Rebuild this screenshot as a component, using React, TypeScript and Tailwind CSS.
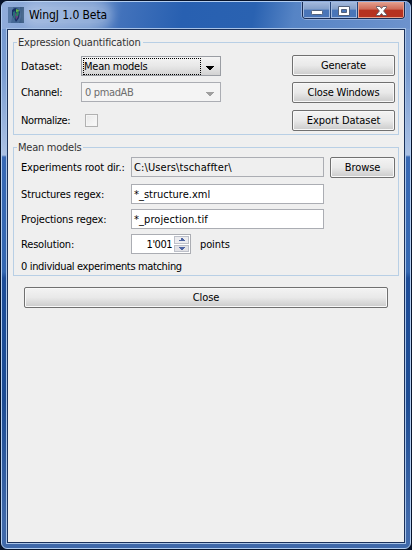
import type { ReactNode } from "react";

function Button({ children, className }: { children: ReactNode; className: string }) {
  return (
    <button
      className={`flex h-[21px] shrink-0 items-center justify-center rounded-[2px] border border-[#707070] bg-linear-to-b from-[#f3f3f3] from-0% via-[#e9e9e9] via-50% to-[#cecece] to-95% pb-px leading-none whitespace-nowrap shadow-[inset_0_0_0_1px_#f8f8f8] ${className}`}
    >
      {children}
    </button>
  );
}

function Group({ title, titleClass, className, children }: { title: string; titleClass: string; className: string; children: ReactNode }) {
  return (
    <section className={`relative w-[386px] border border-[#b8cfe5] ${className}`}>
      <h2 className={`absolute -top-[8px] left-[3px] h-[15px] bg-[#efefef] pl-px leading-[15px] whitespace-nowrap text-[#333] ${titleClass}`}>
        {title}
      </h2>
      {children}
    </section>
  );
}

function Field({ children, className }: { children: ReactNode; className: string }) {
  return (
    <div className={`flex h-5 w-[193px] shrink-0 items-center border border-[#abadb3] pl-[2px] leading-none whitespace-nowrap ${className}`}>
      {children}
    </div>
  );
}

function Arrow({ className, up = false }: { className: string; up?: boolean }) {
  return (
    <svg className={className} viewBox="0 0 8 4" shapeRendering="crispEdges" fill="currentColor">
      <path d={up ? "M3 0h2v1h1v1h1v1h1v1H0V3h1V2h1V1h1z" : "M0 0h8v1H7v1H6v1H5v1H3V3H2V2H1V1H0z"} />
    </svg>
  );
}

function TitleBar() {
  return (
    <header className="flex h-[26px] shrink-0 items-start">
      <svg className="mt-[5px] ml-[6px] h-4 w-4" viewBox="0 0 16 16">
        <rect width="16" height="16" fill="#456895" />
        <path d="M0 0h5v5L3 16H0z" fill="#587aa6" />
        <path d="M4 3l3-2 3 1 2 3-1 6-3 4-2-4-2-3z" fill="#183064" />
        <path d="M5 5l2-1 1 4-1 5-2-4z" fill="#286e78" />
        <path d="M8 2l3 1-1 3-2-1z" fill="#61b44b" />
        <path d="M7 6l3 1v3l-2 3z" fill="#68407d" />
        <path d="M9 4l2 2-1 3H8z" fill="#268459" />
        <path d="M12 0h4v16h-5l2-6z" fill="#365983" />
      </svg>
      <h1 className="mt-[5px] ml-[5px] rounded-full bg-white/25 text-[12px] leading-4 tracking-[-0.08px] whitespace-nowrap text-black shadow-[0_0_9px_6px_rgba(255,255,255,0.25)]">
        WingJ 1.0 Beta
      </h1>
      <div className="mr-[5px] ml-auto flex h-[17px] w-[103px] overflow-hidden rounded-b-[4px] border border-t-0 border-[#192d55] shadow-[0_0_0_1px_#91addb]">
        <div className="flex w-[28px] items-center justify-center border-r border-[#244377] bg-linear-to-b from-[#a4b9dc] via-[#839fc9] via-45% to-[#4975b8] to-50% shadow-[inset_0_0_0_1px_#a2badf]">
          <svg className="mt-[5px] h-[5px] w-3" viewBox="0 0 12 5">
            <rect x=".5" y=".5" width="11" height="4" rx="1" fill="white" stroke="#53617b" />
          </svg>
        </div>
        <div className="flex w-[27px] items-center justify-center border-r border-[#244377] bg-linear-to-b from-[#a4b9dc] via-[#839fc9] via-45% to-[#4975b8] to-50% shadow-[inset_0_0_0_1px_#a2badf]">
          <svg className="mt-px h-[10px] w-3" viewBox="0 0 12 10">
            <path d="M.5.5h11v9H.5z M3.5 3.5h5v3h-5z" fill="white" fillRule="evenodd" stroke="#53617b" />
          </svg>
        </div>
        <div className="flex flex-1 items-center justify-center bg-linear-to-b from-[#e3a090] via-[#cd6a57] via-45% to-[#b63220] to-50% shadow-[inset_0_0_0_1px_#e6a28e]">
          <svg className="mt-px h-[10px] w-[11px]" viewBox="0 0 12 11">
            <path d="M.5.5h3.7L6 2.7 7.8.5h3.7v1.2L8.3 5.5l3.2 3.8v1.2H7.8L6 8.3l-1.8 2.2H.5V9.3l3.2-3.8L.5 1.7z" fill="white" stroke="#5c5560" />
          </svg>
        </div>
      </div>
    </header>
  );
}

function Quantification() {
  return (
    <Group title="Expression Quantification" titleClass="w-[126px] tracking-[-0.16px]" className="mt-[12px] h-[93px]">
      <div className="flex h-full justify-between pr-[3px] pl-[7px]">
        <div className="pt-[13px]">
          <div className="flex h-5 items-center">
            <span className="w-[60px] pt-0.5 tracking-[-0.1px]">Dataset:</span>
            <div className="flex h-5 w-[140px] items-center border border-[#9a9da3] bg-linear-to-b from-[#f4f4f4] via-[#e8e8e8] via-50% to-[#d2d2d2]">
              <span className="ml-px flex h-[17px] w-[118px] items-center border border-dotted border-black leading-none tracking-[-0.25px] whitespace-nowrap">
                Mean models
              </span>
              <Arrow className="mt-[3px] ml-[5px] h-1 w-2 text-black" />
            </div>
          </div>
          <div className="mt-1.5 flex h-5 items-center">
            <span className="w-[60px] pt-0.5 tracking-[-0.35px]">Channel:</span>
            <div className="flex h-5 w-[140px] items-center border border-[#abadb3] bg-[#f4f4f4] pl-[3px] text-[#6d6d6d]">
              <span className="w-[121px] leading-none tracking-[-0.35px]">0 pmadAB</span>
              <Arrow className="mt-[3px] h-1 w-2 text-[#a0a0a0]" />
            </div>
          </div>
          <div className="mt-[8px] flex h-5 items-center">
            <span className="w-[64px] pt-[3px] tracking-[-0.4px]">Normalize:</span>
            <span className="mt-px h-[13px] w-[13px] border border-[#b1b1b1] bg-linear-to-br from-[#e8e8e8] to-[#fbfbfb] shadow-[inset_0_0_0_1px_#f5f5f5]" />
          </div>
        </div>
        <div className="flex flex-col pt-[12px]">
          <Button className="w-[103px] tracking-[-0.15px]">Generate</Button>
          <Button className="mt-1.5 w-[103px] tracking-[-0.17px]">Close Windows</Button>
          <Button className="mt-[7px] w-[103px] tracking-[-0.05px]">Export Dataset</Button>
        </div>
      </div>
    </Group>
  );
}

function MeanModels() {
  return (
    <Group title="Mean models" titleClass="w-[66px] tracking-[-0.25px]" className="mt-[12px] h-[129px] pt-[9px] pl-[7px]">
      <div className="flex h-[21px] items-start leading-5">
        <span className="w-[110px] pt-px tracking-[-0.15px] whitespace-nowrap">Experiments root dir.:</span>
        <Field className="bg-[#efefef] tracking-[0.1px]">C:\Users\tschaffter\</Field>
        <Button className="ml-[6px] w-[65px] tracking-[-0.1px]">Browse</Button>
      </div>
      <div className="mt-[6px] flex h-5 items-center">
        <span className="w-[110px] pt-0.5 tracking-[-0.14px]">Structures regex:</span>
        <Field className="bg-white">*_structure.xml</Field>
      </div>
      <div className="mt-[5px] flex h-5 items-center">
        <span className="w-[110px] pt-0.5 tracking-[-0.17px]">Projections regex:</span>
        <Field className="bg-white tracking-[0.08px]">*_projection.tif</Field>
      </div>
      <div className="mt-[5px] flex h-5 items-center">
        <span className="w-[110px] pt-0.5 tracking-[-0.17px]">Resolution:</span>
        <div className="flex h-5 w-[60px] items-center justify-end border border-[#abadb3] bg-white pr-px leading-none">
          <span className="mr-[2px] tracking-[-0.5px]">1'001</span>
          <div className="flex h-4 w-[15px] flex-col gap-px text-[#4d64a3]">
            <span className="flex flex-1 items-center justify-center border border-[#bdc0c9] bg-[#ececef]"><Arrow up className="h-[3px] w-1.5" /></span>
            <span className="flex flex-1 items-center justify-center border border-[#bdc0c9] bg-[#e2e2e6]"><Arrow className="h-[3px] w-1.5" /></span>
          </div>
        </div>
        <span className="ml-[9px] pt-0.5 tracking-[-0.12px]">points</span>
      </div>
      <p className="mt-[4px] h-[17px] leading-[17px] tracking-[-0.35px] whitespace-nowrap">0 individual experiments matching</p>
    </Group>
  );
}

export default function App() {
  return (
    <div className="h-[550px] w-[412px] bg-[#07132a] p-px font-['DejaVu_Sans_Condensed','DejaVu_Sans',sans-serif] text-[11px] text-black [font-stretch:condensed]">
      <div className="flex h-[548px] w-[410px] flex-col rounded-[6px] border border-[#b2cdf0] bg-[linear-gradient(#7396cd_0px,#7a9dd2_70px,#abc1e4_153px,#3869b5_155px,#3467b1_270px,#1d4d99_276px,#1d4c94_400px,#4069aa_520px)]">
        <div className="flex min-h-0 flex-1 flex-col rounded-t-[5px] bg-[linear-gradient(100deg,#91addb_0px,#6f94cd_90px,#4272bb_120px,#2860b1_180px,#2a62b1_250px,#5684c5_290px,#6e93cd_410px)] bg-[length:100%_27px] bg-no-repeat">
          <TitleBar />
          <main className="mx-[4px] mb-[4px] flex min-h-0 flex-1 flex-col border border-[#a8c3e7] bg-[#efefef]">
            <div className="flex-1 border border-[#1b315a] pl-[5px]">
              <Quantification />
              <MeanModels />
              <div className="mt-[11px] ml-[11px]">
                <Button className="w-[364px] tracking-[-0.1px]">Close</Button>
              </div>
            </div>
          </main>
        </div>
      </div>
    </div>
  );
}
